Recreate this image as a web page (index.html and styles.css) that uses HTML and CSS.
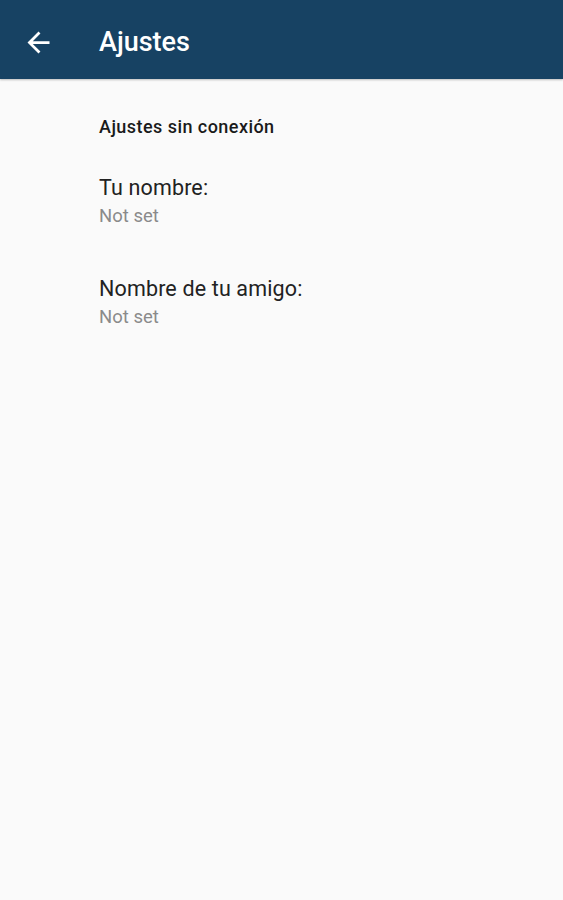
FILE: index.html
```html
<!DOCTYPE html>
<html lang="es">
  <head>
    <meta charset="UTF-8" />
    <meta name="viewport" content="width=device-width, initial-scale=1.0" />
    <title>Ajustes</title>
    <link rel="stylesheet" href="styles.css">
  </head>
  <body>
    <header class="toolbar">
      <button class="back" aria-label="Atrás">
        <svg viewBox="0 0 24 24">
          <path d="M20 11H7.83l5.59-5.59L12 4l-8 8 8 8 1.41-1.41L7.83 13H20v-2z" fill="#fff" />
        </svg>
      </button>
      <h1>Ajustes</h1>
    </header>

    <main class="prefs">
      <h2 class="category">Ajustes sin conexión</h2>

      <div class="pref">
        <div class="pref-title">Tu nombre:</div>
        <div class="pref-summary">Not set</div>
      </div>

      <div class="pref">
        <div class="pref-title">Nombre de tu amigo:</div>
        <div class="pref-summary">Not set</div>
      </div>
    </main>
  </body>
</html>
```

FILE: styles.css
```css
:root {
  --primary: #174263;
  --bg: #fafafa;
  --text: #212121;
  --muted: #8a8a8a;
}

body {
  margin: 0;
  background: var(--bg);
  font-family: Roboto, "Noto Sans", sans-serif;
  color: var(--text);
  min-height: 900px;
}

.toolbar {
  background: var(--primary);
  height: 79px;
  box-sizing: border-box;
  padding-top: 5px;
  display: flex;
  align-items: center;
  box-shadow: 0 1px 2px rgba(0, 0, 0, 0.25);
}

.back {
  background: none;
  border: none;
  padding: 0;
  margin-left: 22px;
  width: 33px;
  height: 33px;
  display: flex;
  align-items: center;
  justify-content: center;
}

.back svg {
  width: 33px;
  height: 33px;
}

.toolbar h1 {
  margin: 0 0 0 44px;
  color: #fff;
  font-size: 27px;
  font-weight: 500;
}

.prefs {
  padding-left: 99px;
  padding-top: 36px;
}

.category {
  margin: 0;
  font-size: 18px;
  font-weight: 500;
  letter-spacing: 0.45px;
  color: #1a1a1a;
  line-height: 24px;
}

.pref {
  padding-top: 35px;
}

.pref + .pref {
  padding-top: 45px;
}

.pref-title {
  font-size: 21.5px;
  letter-spacing: 0.15px;
  line-height: 28px;
  color: #222;
}

.pref-summary {
  font-size: 18.5px;
  line-height: 28px;
  color: var(--muted);
}
```
